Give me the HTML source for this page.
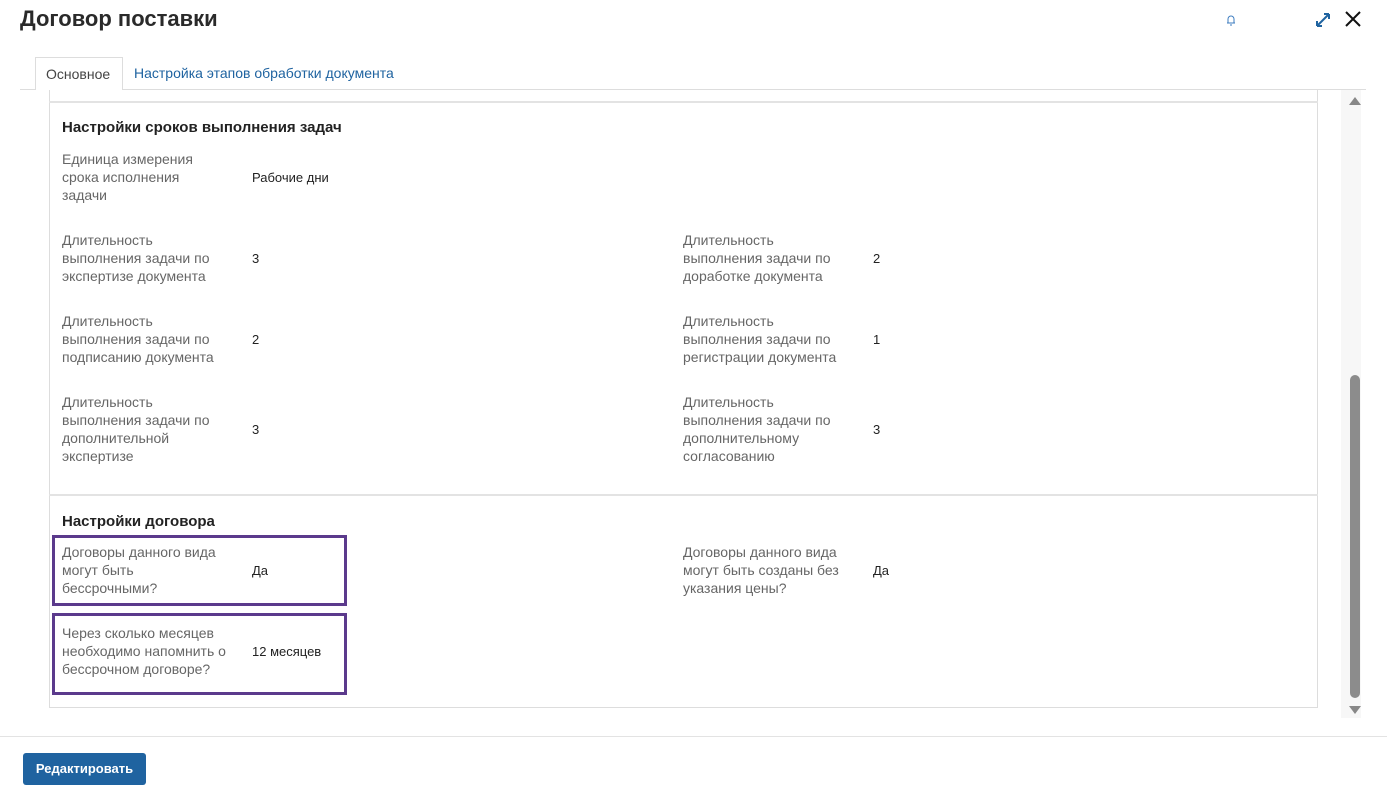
<!DOCTYPE html>
<html><head><meta charset="utf-8"><style>
*{margin:0;padding:0;box-sizing:border-box}
body{width:1387px;height:797px;background:#fff;font-family:"Liberation Sans",sans-serif;position:relative;overflow:hidden}
.a{position:absolute}
.l{position:absolute;font-size:14px;line-height:18px;color:#666;width:168px}
.v{position:absolute;font-size:13px;color:#222}
.h{position:absolute;font-size:15px;font-weight:bold;color:#222}
.box{position:absolute;border:3px solid #5b3a8c}
</style></head><body>
<div class="a" style="left:20px;top:6px;font-size:22px;font-weight:bold;color:#2a2a2a">Договор поставки</div>
<svg class="a" style="left:1224px;top:13px" width="14" height="14" viewBox="0 0 14 14"><path d="M3 10h8M4 10V6a3 3 0 0 1 6 0v4M6 12h2" stroke="#3b7bbf" fill="none" stroke-width="1"/></svg>
<svg class="a" style="left:1314px;top:11px" width="18" height="18" viewBox="0 0 18 18"><path d="M3 15L15 3M3 15v-5M3 15h5M15 3v5M15 3h-5" stroke="#1f63a0" fill="none" stroke-width="2"/></svg>
<svg class="a" style="left:1344px;top:10px" width="18" height="18" viewBox="0 0 18 18"><path d="M2 2L16 16M16 2L2 16" stroke="#111" stroke-width="2"/></svg>
<div class="a" style="left:20px;top:89px;width:1346px;height:1px;background:#ddd"></div>
<div class="a" style="left:35px;top:57px;width:88px;height:33px;border:1px solid #ddd;border-bottom:none;background:#fff;font-size:14px;color:#444;padding:8px 0 0 10px">Основное</div>
<div class="a" style="left:134px;top:65px;font-size:14px;color:#1f63a0">Настройка этапов обработки документа</div>
<div class="a" style="left:49px;top:90px;width:1269px;height:618px;border:1px solid #ddd;border-top:none"></div>
<div class="a" style="left:49px;top:101px;width:1269px;height:2px;background:#e3e3e3"></div>
<div class="a" style="left:49px;top:494px;width:1269px;height:2px;background:#e3e3e3"></div>
<div class="h" style="left:62px;top:119px">Настройки сроков выполнения задач</div>
<div class="l" style="left:62px;top:150px">Единица измерения<br>срока исполнения<br>задачи</div><div class="v" style="left:252px;top:170px">Рабочие дни</div>
<div class="l" style="left:62px;top:231px">Длительность выполнения задачи по экспертизе документа</div><div class="v" style="left:252px;top:251px">3</div>
<div class="l" style="left:683px;top:231px">Длительность выполнения задачи по доработке документа</div><div class="v" style="left:873px;top:251px">2</div>
<div class="l" style="left:62px;top:312px">Длительность выполнения задачи по подписанию документа</div><div class="v" style="left:252px;top:332px">2</div>
<div class="l" style="left:683px;top:312px">Длительность выполнения задачи по регистрации документа</div><div class="v" style="left:873px;top:332px">1</div>
<div class="l" style="left:62px;top:393px">Длительность выполнения задачи по дополнительной экспертизе</div><div class="v" style="left:252px;top:422px">3</div>
<div class="l" style="left:683px;top:393px">Длительность выполнения задачи по дополнительному согласованию</div><div class="v" style="left:873px;top:422px">3</div>
<div class="h" style="left:62px;top:513px">Настройки договора</div>
<div class="box" style="left:52px;top:535px;width:295px;height:71px"></div>
<div class="box" style="left:52px;top:613px;width:295px;height:82px"></div>
<div class="l" style="left:62px;top:543px">Договоры данного вида могут быть бессрочными?</div><div class="v" style="left:252px;top:563px">Да</div>
<div class="l" style="left:683px;top:543px">Договоры данного вида могут быть созданы без указания цены?</div><div class="v" style="left:873px;top:563px">Да</div>
<div class="l" style="left:62px;top:624px;width:172px">Через сколько месяцев необходимо напомнить о бессрочном договоре?</div><div class="v" style="left:252px;top:644px">12 месяцев</div>
<div class="a" style="left:1341px;top:90px;width:20px;height:628px;background:#f7f7f7"></div>
<div class="a" style="left:1350px;top:97px;border-left:6px solid transparent;border-right:6px solid transparent;border-bottom:8px solid #888;margin-left:-1px"></div>
<div class="a" style="left:1349px;top:706px;border-left:6px solid transparent;border-right:6px solid transparent;border-top:8px solid #888"></div>
<div class="a" style="left:1350px;top:375px;width:10px;height:323px;background:#8c8c8c;border-radius:5px"></div>
<div class="a" style="left:0;top:736px;width:1387px;height:1px;background:#e3e3e3"></div>
<div class="a" style="left:23px;top:753px;width:123px;height:32px;background:#1f63a0;border-radius:3px;color:#fff;font-size:13px;font-weight:bold;text-align:center;line-height:32px">Редактировать</div>
</body></html>
